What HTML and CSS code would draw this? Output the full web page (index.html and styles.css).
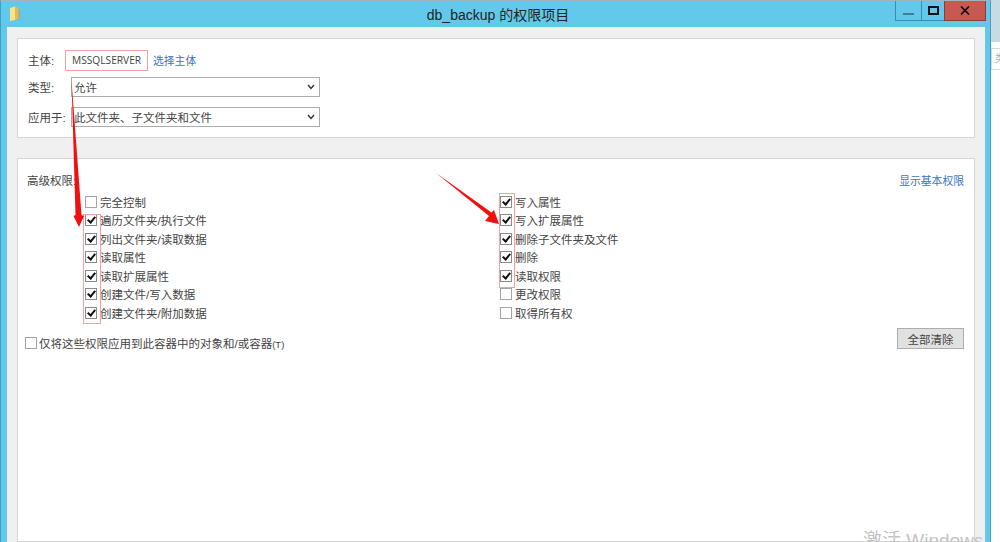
FILE: index.html
```html
<!DOCTYPE html>
<html lang="zh-CN">
<head>
    <meta charset="UTF-8">
    <title>db_backup 的权限项目</title>
    <link rel="stylesheet" href="styles.css">
</head>
<body>
    <div class="window">
        <!-- 标题栏 -->
        <div class="titlebar">
            <svg class="folder-icon" width="13" height="16" viewBox="0 0 13 16">
                <path d="M7 3 L11 4 L11 14 L7 14 Z" fill="#8fa9b5"/>
                <path d="M1 2 L6 0.5 L6 14 L1 15 Z" fill="#f7e28e"/>
                <path d="M6 0.5 L9.5 2 L9.5 13 L6 14 Z" fill="#e6bb4c"/>
            </svg>
            <div class="title">db_backup 的权限项目</div>
            <div class="controls">
                <div class="ctl ctl-min"><span class="min-bar"></span></div>
                <div class="ctl ctl-max"><span class="max-box"></span></div>
                <div class="ctl ctl-close">
                    <svg width="10" height="9" viewBox="0 0 10 9"><path d="M1 0.5 L9 8.5 M9 0.5 L1 8.5" stroke="#111" stroke-width="1.7" fill="none"/></svg>
                </div>
            </div>
        </div>

        <div class="content">
            <!-- 主体 -->
            <div class="panel panel-top">
                <div class="field field-principal">
                    <span class="field-label">主体:</span>
                    <span class="principal">MSSQLSERVER</span>
                    <a class="link">选择主体</a>
                </div>
                <div class="field">
                    <span class="field-label">类型:</span>
                    <div class="select">允许<svg class="chev" width="8" height="6" viewBox="0 0 8 6"><path d="M1 1 L4 4.5 L7 1" stroke="#333" stroke-width="1.4" fill="none"/></svg></div>
                </div>
                <div class="field">
                    <span class="field-label">应用于:</span>
                    <div class="select">此文件夹、子文件夹和文件<svg class="chev" width="8" height="6" viewBox="0 0 8 6"><path d="M1 1 L4 4.5 L7 1" stroke="#333" stroke-width="1.4" fill="none"/></svg></div>
                </div>
            </div>

            <!-- 高级权限 -->
            <div class="panel panel-perms">
                <div class="perms-head">
                    <span>高级权限:</span>
                    <a class="link">显示基本权限</a>
                </div>
                <div class="perms-grid">
                    <div class="perm-col">
                        <div class="perm"><span class="cb"></span>完全控制</div>
                        <div class="perm"><span class="cb on"></span>遍历文件夹/执行文件</div>
                        <div class="perm"><span class="cb on"></span>列出文件夹/读取数据</div>
                        <div class="perm"><span class="cb on"></span>读取属性</div>
                        <div class="perm"><span class="cb on"></span>读取扩展属性</div>
                        <div class="perm"><span class="cb on"></span>创建文件/写入数据</div>
                        <div class="perm"><span class="cb on"></span>创建文件夹/附加数据</div>
                    </div>
                    <div class="perm-col">
                        <div class="perm"><span class="cb on"></span>写入属性</div>
                        <div class="perm"><span class="cb on"></span>写入扩展属性</div>
                        <div class="perm"><span class="cb on"></span>删除子文件夹及文件</div>
                        <div class="perm"><span class="cb on"></span>删除</div>
                        <div class="perm"><span class="cb on"></span>读取权限</div>
                        <div class="perm"><span class="cb"></span>更改权限</div>
                        <div class="perm"><span class="cb"></span>取得所有权</div>
                    </div>
                </div>
                <div class="perms-foot">
                    <div class="perm apply"><span class="cb"></span><span>仅将这些权限应用到此容器中的对象和/或容器<span class="accel">(T)</span></span></div>
                    <button class="btn">全部清除</button>
                </div>
            </div>
        </div>
    </div>

    <!-- 窗口右侧露出的部分 -->
    <div class="behind">
        <div class="behind-top"></div>
        <div class="behind-box">类</div>
    </div>

    <div class="watermark">激活 Windows</div>

    <!-- 红色标注 -->
    <div class="mark mark-principal"></div>
    <div class="mark mark-left"></div>
    <div class="mark mark-right"></div>
    <svg class="arrows" width="1000" height="542" viewBox="0 0 1000 542">
        <path d="M71.5 80 L75.5 215 L73.5 216 L79 227 L84 216 L81.5 215 Z" fill="#f01010"/>
        <path d="M436 173 L489 216 L485 221 L499 224 L494 210 L491.5 212.5 Z" fill="#f01010"/>
    </svg>
</body>
</html>
```

FILE: styles.css
```css
/* 整体 */
body {
    margin: 0;
    width: 1000px;
    height: 542px;
    overflow: hidden;
    display: flex;
    background-color: #fff;
    font-family: "Liberation Sans", "Noto Sans CJK SC", sans-serif;
    font-size: 11.5px;
    color: #444;
    filter: blur(0.3px);
}

.window {
    width: 991px;
    height: 542px;
    flex-shrink: 0;
    display: flex;
    flex-direction: column;
    background-color: #62c9ea;
    border-top: 1px solid #9fb4bd;
    border-left: 1px solid #3f9fc4;
    border-right: 1px solid #3f9fc4;
    box-sizing: border-box;
}

/* 标题栏 */
.titlebar {
    height: 26px;
    flex-shrink: 0;
    display: flex;
    align-items: center;
    padding-left: 8px;
    padding-right: 4px;
}

.folder-icon {
    flex-shrink: 0;
    margin-top: -1px;
}

.title {
    flex: 1;
    text-align: center;
    font-size: 14px;
    color: #222;
    padding-left: 79px;
    margin-top: -1px;
}

.controls {
    display: flex;
    align-self: flex-start;
    height: 20px;
    box-sizing: border-box;
}

.ctl {
    height: 20px;
    box-sizing: border-box;
    display: flex;
    align-items: center;
    justify-content: center;
    border: 1px solid #3c8fab;
    border-top: none;
}

.ctl-min {
    width: 26px;
    border-right: none;
}

.ctl-max {
    width: 23px;
    border-right: none;
}

.ctl-close {
    width: 42px;
    background-color: #c65a50;
    border-color: #8f3a32;
}

.min-bar {
    width: 11px;
    height: 2px;
    margin-top: 6px;
    background-color: #3a7f98;
}

.max-box {
    width: 7px;
    height: 5px;
    margin-top: -1px;
    border: 2px solid #111;
}

.content {
    flex: 1;
    min-height: 0;
    margin-left: 6px;
    margin-right: 5px;
    padding: 11px 10px 0;
    background-color: #f0f0f0;
    display: flex;
    flex-direction: column;
    gap: 20px;
}

.panel {
    background-color: #fff;
    border: 1px solid #d6d6d6;
    box-sizing: border-box;
}

/* 主体 */
.panel-top {
    height: 100px;
    padding: 10px 0 0 10px;
    display: flex;
    flex-direction: column;
}

.field {
    display: flex;
    align-items: center;
    height: 20px;
    margin-bottom: 10px;
}

.field-principal {
    height: 22px;
    margin-bottom: 6px;
}

.field-label {
    width: 44px;
    flex-shrink: 0;
}

.principal {
    font-family: "Open Sans", sans-serif;
    font-size: 10.2px;
    width: 81px;
}

.link {
    color: #3a74c4;
    font-size: 10.8px;
}

.select {
    width: 249px;
    height: 20px;
    box-sizing: border-box;
    border: 1px solid #ababab;
    display: flex;
    align-items: center;
    justify-content: space-between;
    padding: 0 4px 0 2px;
    margin-left: -1px;
    font-size: 11.5px;
}

/* 高级权限 */
.panel-perms {
    flex: 1;
    min-height: 0;
    padding: 14px 10px 0 9px;
}

.perms-head {
    display: flex;
    justify-content: space-between;
    height: 16px;
    line-height: 16px;
}

.perms-grid {
    display: grid;
    grid-template-columns: 415px 1fr;
    margin-top: 3.6px;
    padding-left: 58px;
}

.perm {
    height: 18.5px;
    display: flex;
    align-items: center;
    gap: 3px;
}

.cb {
    width: 12px;
    height: 12px;
    box-sizing: border-box;
    flex-shrink: 0;
    background-color: #fff;
    border: 1px solid #a4a4a4;
    position: relative;
}

.cb.on {
    border-color: #8a8a8a;
}

.cb.on::after {
    content: "";
    position: absolute;
    left: 3px;
    top: 0;
    width: 3px;
    height: 6px;
    border-right: 2px solid #111;
    border-bottom: 2px solid #111;
    transform: rotate(40deg);
}

.perms-foot {
    display: flex;
    justify-content: space-between;
    align-items: flex-start;
    margin-top: 6.4px;
}

.apply {
    gap: 2px;
    margin-top: 5px;
    margin-left: -2px;
}

.accel {
    font-size: 9.5px;
}

.btn {
    width: 67px;
    height: 21px;
    padding: 0;
    background-color: #e1e1e1;
    border: 1px solid #adadad;
    font-family: inherit;
    font-size: 11.5px;
    color: #444;
}

/* 窗口右侧 */
.behind {
    flex: 1;
    min-width: 0;
    display: flex;
    flex-direction: column;
}

.behind-top {
    height: 42px;
    background-color: #c9dbe2;
}

.behind-box {
    height: 20px;
    margin-top: 6px;
    border-top: 1px solid #d8d8d8;
    border-bottom: 1px solid #d8d8d8;
    border-left: 1px solid #d8d8d8;
    font-size: 10px;
    color: #aaa;
    padding-left: 3px;
    line-height: 20px;
    overflow: hidden;
}

/* 覆盖层 */
.watermark {
    position: absolute;
    left: 863px;
    top: 531px;
    font-size: 19px;
    line-height: 20px;
    white-space: nowrap;
    color: #c4c4c4;
}

.mark {
    position: absolute;
    box-sizing: border-box;
    border: 1px solid #f6a0a0;
}

.mark-principal {
    left: 65px;
    top: 50px;
    width: 83px;
    height: 21px;
}

.mark-left {
    left: 83px;
    top: 214px;
    width: 18px;
    height: 110px;
}

.mark-right {
    left: 499px;
    top: 193px;
    width: 16px;
    height: 95px;
}

.arrows {
    position: absolute;
    left: 0;
    top: 0;
}
```
